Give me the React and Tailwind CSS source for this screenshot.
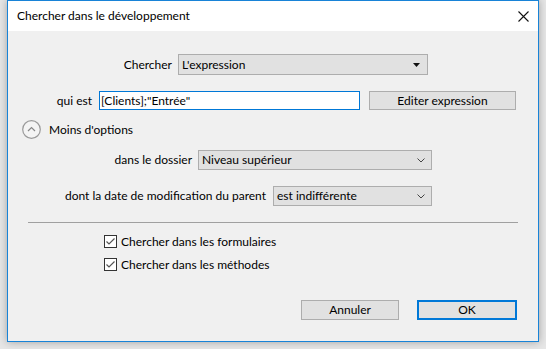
import React from 'react';

function Check() {
    return (
        <svg width="13" height="13" viewBox="0 0 13 13" className="shrink-0">
            <rect x="0.5" y="0.5" width="12" height="12" fill="#fff" stroke="#333" />
            <path d="M2.5 6.5 L5 9 L10.5 3.5" fill="none" stroke="#555" strokeWidth="1.2" />
        </svg>
    );
}

function Chevron() {
    return (
        <svg width="8" height="5" viewBox="0 0 8 5">
            <path d="M0.5 0.5 L4 4 L7.5 0.5" fill="none" stroke="#444" strokeWidth="1" />
        </svg>
    );
}

export default function App() {
    return (
        <div className="w-[546px] h-[349px] bg-[#e6e6e6] text-[12px] text-black" style={{ fontFamily: 'Lato, "Noto Sans", sans-serif' }}>
            <div className="ml-[7px] w-[532px] h-[342px] border border-[#1883d7] bg-[#f0f0f0] flex flex-col shadow-[0_0_8px_rgba(0,0,0,0.3)]">
                {/* Title bar */}
                <div className="h-[30px] bg-white flex items-center justify-between pl-[9px] pr-[9px]">
                    <span>Chercher dans le développement</span>
                    <svg width="11" height="11" viewBox="0 0 11 11">
                        <path d="M0.5 0.5 L10.5 10.5 M10.5 0.5 L0.5 10.5" stroke="#111" strokeWidth="1.1" />
                    </svg>
                </div>

                {/* Chercher */}
                <div className="flex items-center mt-[23px] h-[21px]">
                    <span className="w-[164px] text-right">Chercher</span>
                    <div className="ml-[6px] w-[250px] h-[21px] bg-[#e1e1e1] border border-[#adadad] flex items-center justify-between pl-[3px] pr-[7px]">
                        <span>L'expression</span>
                        <svg width="7" height="4" viewBox="0 0 7 4"><path d="M0 0 H7 L3.5 4 Z" fill="#111" /></svg>
                    </div>
                </div>

                {/* qui est */}
                <div className="flex items-center mt-[16px] h-[19px]">
                    <span className="w-[84px] text-right">qui est</span>
                    <div className="ml-[7px] w-[261px] h-[19px] bg-white border border-[#0078d7] flex items-center pl-[1px]">
                        [Clients];"Entrée"
                    </div>
                    <button className="ml-[9px] w-[147px] h-[19px] bg-[#e1e1e1] border border-[#adadad] flex items-center justify-center">
                        Editer expression
                    </button>
                </div>

                {/* Moins d'options */}
                <div className="flex items-center mt-[10px] ml-[14px] h-[19px]">
                    <svg width="19" height="19" viewBox="0 0 19 19">
                        <circle cx="9.5" cy="9.5" r="8.8" fill="#f4f4f4" stroke="#9a9a9a" strokeWidth="1.2" />
                        <path d="M6 11 L9.5 7.5 L13 11" fill="none" stroke="#888" strokeWidth="1.2" />
                    </svg>
                    <span className="ml-[8px]">Moins d'options</span>
                </div>

                {/* dans le dossier */}
                <div className="flex items-center mt-[11px] h-[20px]">
                    <span className="w-[184px] text-right">dans le dossier</span>
                    <div className="ml-[6px] w-[234px] h-[20px] bg-[#e1e1e1] border border-[#adadad] flex items-center justify-between pl-[3px] pr-[6px]">
                        <span>Niveau supérieur</span>
                        <Chevron />
                    </div>
                </div>

                {/* dont la date */}
                <div className="flex items-center mt-[16px] h-[20px]">
                    <span className="w-[258px] text-right">dont la date de modification du parent</span>
                    <div className="ml-[7px] w-[159px] h-[20px] bg-[#e1e1e1] border border-[#adadad] flex items-center justify-between pl-[3px] pr-[6px]">
                        <span>est indifférente</span>
                        <Chevron />
                    </div>
                </div>

                {/* separator */}
                <div className="mt-[16px] ml-[20px] w-[490px] h-px bg-[#a0a0a0]" />

                {/* checkboxes */}
                <div className="flex flex-col ml-[96px] mt-[12px] gap-[10px]">
                    <label className="flex items-center gap-[4px] h-[13px]">
                        <Check />
                        <span>Chercher dans les formulaires</span>
                    </label>
                    <label className="flex items-center gap-[4px] h-[13px]">
                        <Check />
                        <span>Chercher dans les méthodes</span>
                    </label>
                </div>

                {/* buttons */}
                <div className="flex justify-end mt-[29px] mr-[21px] gap-[18px]">
                    <button className="w-[98px] h-[20px] bg-[#e1e1e1] border border-[#adadad] flex items-center justify-center">
                        Annuler
                    </button>
                    <button className="w-[100px] h-[20px] bg-[#e1e1e1] border-2 border-[#0078d7] flex items-center justify-center">
                        OK
                    </button>
                </div>
            </div>
        </div>
    );
}
